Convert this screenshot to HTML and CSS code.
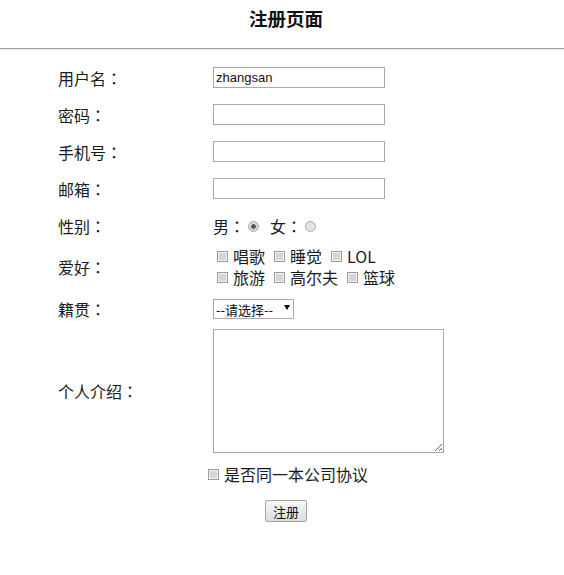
FILE: index.html
```html
<!DOCTYPE html>
<html lang="zh-CN">
<head>
<meta charset="utf-8">
<title>注册页面</title>
<link rel="stylesheet" href="styles.css">
</head>
<body>
<h2 class="title">注册页面</h2>
<hr class="divider">
<form class="reg">
  <div class="row">
    <span class="label">用户名<span class="colon" lang="zh-TW">：</span></span>
    <input class="text" type="text" value="zhangsan">
  </div>
  <div class="row">
    <span class="label">密码<span class="colon" lang="zh-TW">：</span></span>
    <input class="text" type="password">
  </div>
  <div class="row">
    <span class="label">手机号<span class="colon" lang="zh-TW">：</span></span>
    <input class="text" type="text">
  </div>
  <div class="row">
    <span class="label">邮箱<span class="colon" lang="zh-TW">：</span></span>
    <input class="text" type="text">
  </div>
  <div class="row row-gender">
    <span class="label">性别<span class="colon" lang="zh-TW">：</span></span>
    <div class="gender">
      <span>男<span class="colon" lang="zh-TW">：</span></span><input class="radio" type="radio" name="sex" checked>
      <span>女<span class="colon" lang="zh-TW">：</span></span><input class="radio" type="radio" name="sex">
    </div>
  </div>
  <div class="row row-hobby">
    <span class="label">爱好<span class="colon" lang="zh-TW">：</span></span>
    <div class="hobbies">
      <div class="hobby-line">
        <label class="hobby"><input class="cb" type="checkbox">唱歌</label>
        <label class="hobby"><input class="cb" type="checkbox">睡觉</label>
        <label class="hobby"><input class="cb" type="checkbox">LOL</label>
      </div>
      <div class="hobby-line">
        <label class="hobby"><input class="cb" type="checkbox">旅游</label>
        <label class="hobby"><input class="cb" type="checkbox">高尔夫</label>
        <label class="hobby"><input class="cb" type="checkbox">篮球</label>
      </div>
    </div>
  </div>
  <div class="row row-origin">
    <span class="label">籍贯<span class="colon" lang="zh-TW">：</span></span>
    <span class="select-wrap">
      <select class="select">
        <option>--请选择--</option>
      </select>
    </span>
  </div>
  <div class="row row-intro">
    <span class="label">个人介绍<span class="colon" lang="zh-TW">：</span></span>
    <textarea class="intro"></textarea>
  </div>
  <div class="row row-agree">
    <label class="agree"><input class="cb cb-agree" type="checkbox">是否同一本公司协议</label>
  </div>
  <div class="row row-submit">
    <button class="btn" type="button">注册</button>
  </div>
</form>
</body>
</html>
```
FILE: styles.css
```css
body {
  margin: 0;
  font-family: "Noto Sans CJK SC", "Noto Sans", sans-serif;
  color: #1a1a1a;
  background: #fff;
}

.title {
  margin: 0;
  padding: 6px 0 0 8px;
  font-size: 18.5px;
  line-height: 24px;
  font-weight: bold;
  text-align: center;
  color: #111;
}

.divider {
  margin: 18px 0 0;
  height: 0;
  border: 0;
  border-top: 1px solid #a0a0a0;
  border-bottom: 1px solid #efefef;
}

.reg {
  margin: 9px 0 0 58px;
  width: 456px;
}

.row {
  display: flex;
  align-items: center;
  height: 37px;
}

.row-gender { height: 38px; }
.row-hobby { height: 44px; }
.row-origin { height: 39px; }
.row-intro { height: 126px; }
.row-agree { height: 40px; justify-content: center; padding-left: 4px; }
.row-submit { height: 34px; justify-content: center; }

.label {
  flex: none;
  width: 155px;
  font-size: 16px;
}

.colon {
  font-family: "Noto Sans CJK TC", "Noto Sans CJK JP", sans-serif;
}

.text {
  box-sizing: border-box;
  width: 172px;
  height: 21px;
  margin: 0;
  padding: 0 2px;
  border: 1px solid #a9a9a9;
  border-radius: 0;
  font: 13px "Liberation Sans", Arial, sans-serif;
  color: #111;
}

.gender {
  display: flex;
  align-items: center;
  font-size: 16px;
}

.radio {
  appearance: none;
  -webkit-appearance: none;
  box-sizing: border-box;
  width: 11px;
  height: 11px;
  margin: 0 11px 0 3px;
  border: 1px solid #a8a8a8;
  border-radius: 50%;
  background: #e4e4e4;
}

.radio:checked {
  background: radial-gradient(circle, #555 0, #555 2px, #d8d8d8 2.6px);
}

.hobbies {
  display: flex;
  flex-direction: column;
}

.hobby-line {
  display: flex;
  align-items: center;
  height: 21px;
}

.hobby {
  display: flex;
  align-items: center;
  margin-right: 5px;
  font-size: 16px;
  line-height: 21px;
}

.cb {
  appearance: none;
  -webkit-appearance: none;
  box-sizing: border-box;
  width: 11px;
  height: 11px;
  margin: 0 5px 0 4px;
  border: 1px solid #9c9c9c;
  border-radius: 0;
  background: #d6d6d6;
  box-shadow: inset 0 0 0 1px #f2f2f2;
}

.select-wrap {
  position: relative;
  display: inline-block;
}

.select-wrap::after {
  content: "";
  position: absolute;
  right: 4px;
  top: 6px;
  border-left: 3.5px solid transparent;
  border-right: 3.5px solid transparent;
  border-top: 5px solid #000;
  pointer-events: none;
}

.select {
  appearance: none;
  -webkit-appearance: none;
  box-sizing: border-box;
  display: block;
  width: 81px;
  height: 20px;
  margin: 0;
  padding: 0 0 0 2px;
  border: 1px solid #a9a9a9;
  border-radius: 0;
  background: #fff;
  font: 13px "Noto Sans CJK SC", sans-serif;
  color: #111;
}

.intro {
  box-sizing: border-box;
  width: 231px;
  height: 124px;
  margin: 0;
  border: 1px solid #a9a9a9;
  border-radius: 0;
}

.agree {
  display: flex;
  align-items: center;
  font-size: 16px;
}

.cb-agree {
  width: 11px;
  height: 11px;
  margin: 0 5px 0 0;
}

.btn {
  box-sizing: border-box;
  width: 42px;
  height: 22px;
  padding: 0;
  border: 1px solid #a3a3a3;
  border-radius: 2px;
  background: linear-gradient(#f7f7f7, #dddddd);
  font: 13px "Noto Sans CJK SC", sans-serif;
  color: #111;
}
```
